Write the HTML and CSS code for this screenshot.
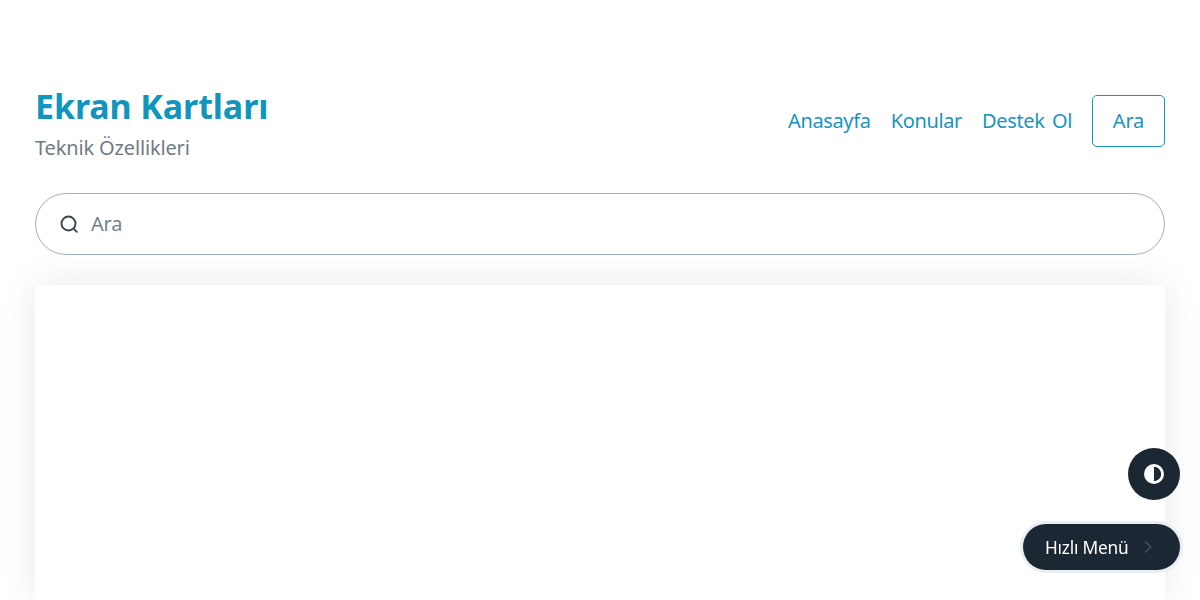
FILE: index.html
```html
<!DOCTYPE html>
<html lang="tr">
<head>
<meta charset="utf-8">
<title>Ekran Kartları</title>
<link rel="stylesheet" href="styles.css">
</head>
<body>
<div class="page">
  <header class="header">
    <div class="brand">
      <h1 class="title">Ekran Kartları</h1>
      <p class="subtitle">Teknik Özellikleri</p>
    </div>
    <nav class="nav">
      <a class="nav-link" href="#">Anasayfa</a>
      <a class="nav-link" href="#">Konular</a>
      <a class="nav-link" href="#">Destek Ol</a>
      <a class="nav-button" href="#">Ara</a>
    </nav>
  </header>
  <div class="search">
    <svg class="search-icon" width="20" height="20" viewBox="0 0 20 20" fill="none" stroke="#3a444d" stroke-width="1.9" stroke-linecap="round"><circle cx="9.5" cy="9.5" r="7"/><path d="M14.8 14.8 L17.8 17.8"/></svg>
    <span class="search-text">Ara</span>
  </div>
  <main class="card"></main>
</div>
<button class="theme-toggle" aria-label="Tema">
  <svg width="20" height="20" viewBox="0 0 20 20"><circle cx="10" cy="10" r="10" fill="#fff"/><path d="M10 2.8 A7.2 7.2 0 0 1 10 17.2 Z" fill="#1b2733"/></svg>
</button>
<button class="quick-menu">
  <span>Hızlı Menü</span>
  <svg width="10" height="14" viewBox="0 0 10 14" fill="none" stroke="#46525d" stroke-width="1.4"><path d="M2 1.5 L8 7 L2 12.5"/></svg>
</button>
</body>
</html>
```
FILE: styles.css
```css
html, body { margin: 0; height: 600px; overflow: hidden; background: #fff; }
body { font-family: "Noto Sans", "Open Sans", sans-serif; }
.page { padding: 85px 35px 0; display: flex; flex-direction: column; height: 515px; }
.header { display: flex; justify-content: space-between; align-items: flex-start; height: 78px; }
.title { margin: 0; font-size: 34px; line-height: 42px; font-weight: 700; color: #1295bd; letter-spacing: -0.1px; }
.subtitle { margin: 7px 0 0; font-size: 20px; line-height: 28px; color: #6f7b85; letter-spacing: -0.15px; }
.nav { display: flex; align-items: center; gap: 20px; margin-top: 10px; }
.nav-link { font-size: 20px; color: #1a94bc; text-decoration: none; letter-spacing: -0.35px; word-spacing: 2.5px; padding-bottom: 2px; }
.nav-button { width: 71px; height: 50px; box-sizing: content-box; border: 1px solid #1a94bc; border-radius: 5px; display: flex; align-items: center; justify-content: center; font-size: 20px; line-height: 24px; color: #1a94bc; text-decoration: none; letter-spacing: -0.2px; }
.search { margin-top: 30px; height: 60px; border: 1px solid #9fb0bb; border-radius: 31px; display: flex; align-items: center; padding-left: 23px; gap: 12px; flex: none; }
.search-text { font-size: 20px; color: #76818b; letter-spacing: -0.2px; padding-bottom: 2px; }
.card { margin-top: 30px; flex: none; height: 315px; background: #fff; border-radius: 4px; box-shadow: 0 0 40px rgba(0, 0, 0, 0.09); }
.theme-toggle { position: fixed; top: 448px; left: 1128px; width: 52px; height: 52px; border: 0; border-radius: 50%; background: #1b2733; display: flex; align-items: center; justify-content: center; padding: 0; }
.quick-menu { position: fixed; top: 524px; left: 1023px; width: 157px; height: 46px; border: 0; border-radius: 23px; background: #1b2733; color: #fff; box-shadow: 0 0 0 3px #e9eef2; display: flex; align-items: center; justify-content: space-between; padding: 0 27px 0 22px; font: 17.3px "Noto Sans", sans-serif; letter-spacing: -0.2px; }
```
